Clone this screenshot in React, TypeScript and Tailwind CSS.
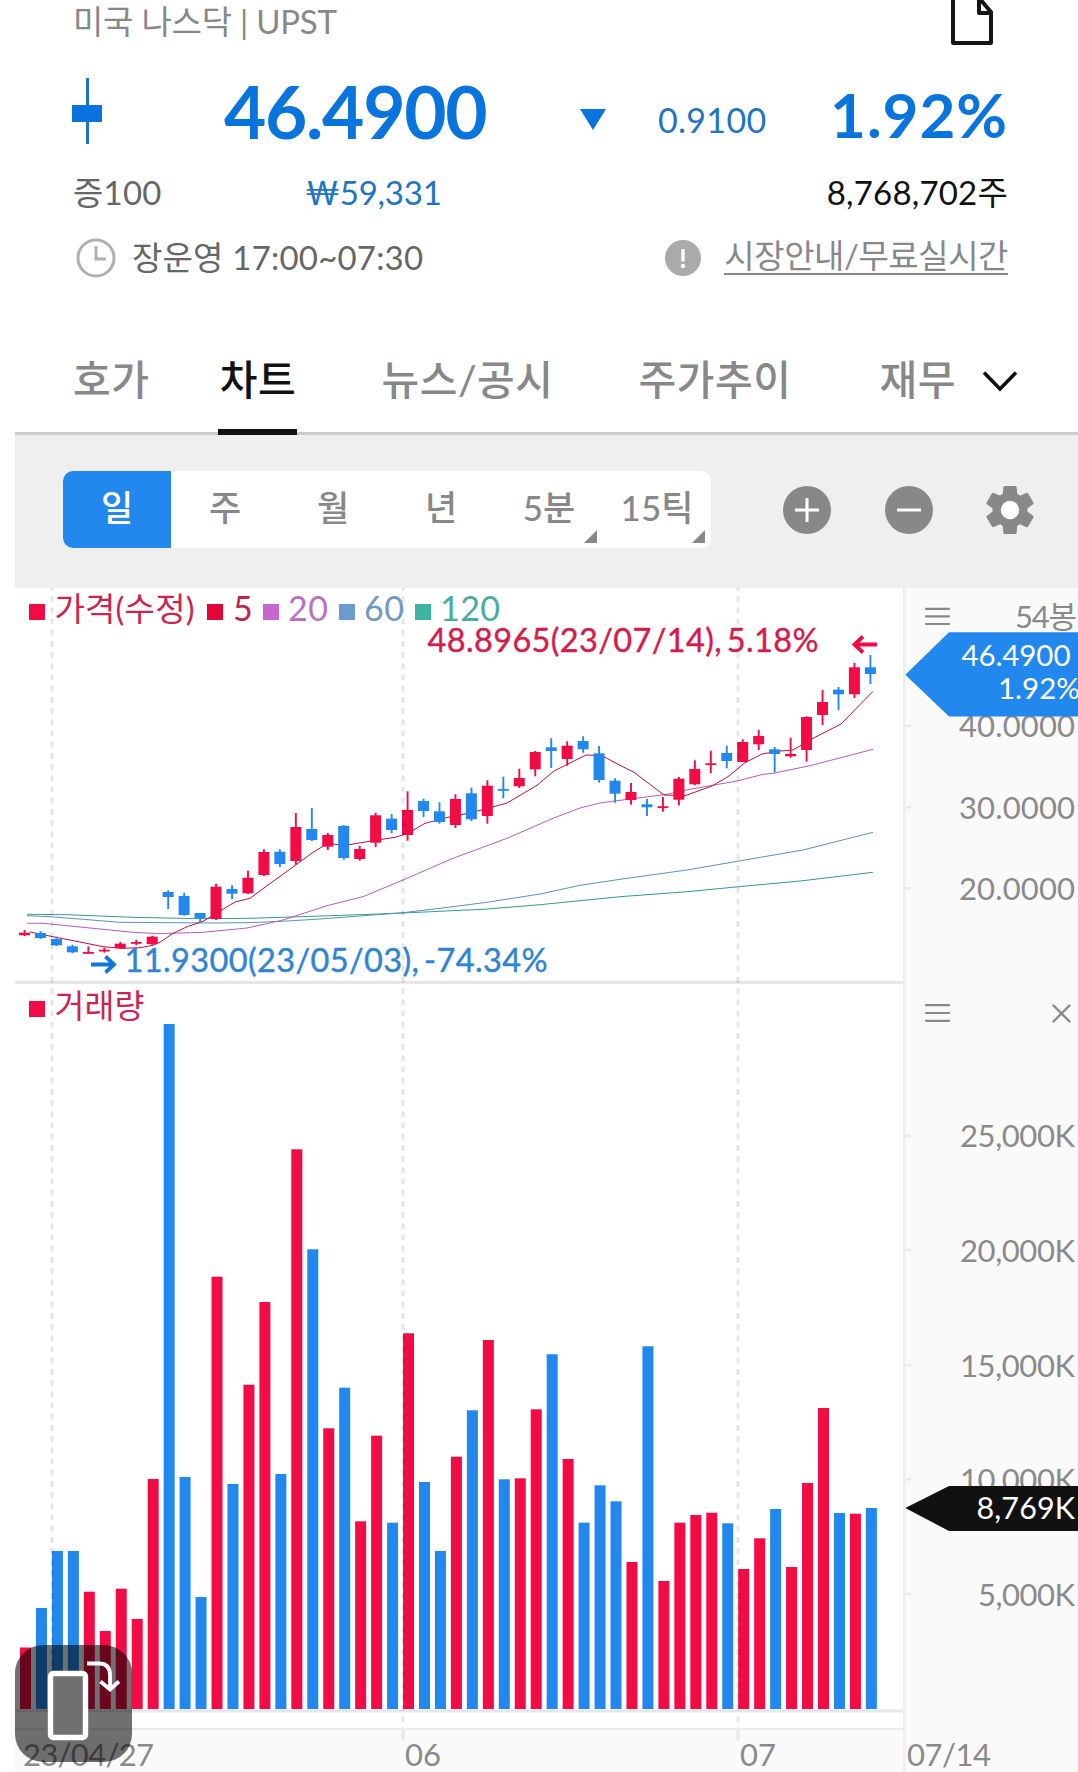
import React from "react";

type Candle = [up: number, high: number, top: number, bottom: number, low: number];

const RED = "#f20c46";
const BLUE = "#2388ed";

// up flag, then high / body top / body bottom / low in chart units
const candles: Candle[] = [
  [1, 342, 344.7, 347.3, 348],
  [0, 343.3, 345, 350, 351],
  [0, 348.7, 351, 357.3, 358],
  [0, 356.7, 358.3, 364.3, 365.3],
  [1, 358.3, 364, 365.7, 366],
  [1, 359.7, 361.7, 363.3, 364.7],
  [1, 354, 355.7, 360.3, 361],
  [1, 351.7, 354, 355.3, 357.3],
  [1, 347.7, 348.7, 356, 357],
  [0, 302.3, 304, 309, 321],
  [0, 304.7, 308, 327, 327.7],
  [0, 325, 325, 330.3, 334.3],
  [1, 295.7, 298.7, 331, 332],
  [0, 297.3, 301, 305.7, 311],
  [1, 282.7, 289.7, 305.3, 306],
  [1, 261.3, 264, 287, 288],
  [0, 261.3, 263.7, 276, 279],
  [1, 225, 239, 273, 276.7],
  [0, 220, 241, 252, 253],
  [1, 245, 247, 258.7, 262],
  [0, 237, 238, 270, 271.7],
  [1, 257.7, 261, 271, 272.7],
  [1, 224.7, 227.3, 254.7, 259],
  [0, 226, 230.7, 242, 245.3],
  [1, 203.3, 222, 247, 252.7],
  [0, 210.7, 213, 223, 229],
  [0, 214.3, 223.3, 234, 235.7],
  [1, 206.3, 211, 237, 240],
  [0, 199.7, 205.3, 231.3, 233],
  [1, 192.3, 197.7, 228, 235.7],
  [0, 188.7, 201, 202.7, 210.3],
  [1, 180.7, 190, 198.3, 200],
  [1, 163, 164, 181.3, 188.3],
  [0, 150.3, 159.3, 163, 180],
  [1, 153.3, 157.7, 171, 177.7],
  [0, 148.3, 153, 161.3, 164.7],
  [0, 158, 165.3, 192, 194.7],
  [0, 190.3, 192.7, 205.7, 214.7],
  [1, 195, 204, 212, 216.7],
  [0, 211, 216.3, 219.3, 228],
  [1, 209, 218.3, 219.7, 223.7],
  [1, 189, 190.7, 211.7, 217.3],
  [1, 172.3, 181, 196.3, 197.3],
  [1, 162.7, 175.3, 176.7, 185],
  [0, 157.7, 165, 173, 180.3],
  [1, 151.3, 154, 174, 174],
  [1, 142, 148, 156.3, 162],
  [0, 159, 161.3, 166, 184.3],
  [1, 149.7, 166, 168.3, 169.7],
  [1, 128.3, 129, 162, 173.7],
  [1, 102, 114, 127, 137],
  [0, 99, 101.7, 106.3, 122.3],
  [1, 75, 79.3, 106.3, 110],
  [0, 67, 79.3, 86, 96],
];

const VOLUME_BASE = 1121;

// bar heights, same order as the candles
const volumes = [
  61.5, 101, 158, 158, 117.3, 78, 120.3, 90, 230, 685, 232, 112, 432.3, 225,
  324.3, 407, 235, 559.7, 459.7, 280.7, 321.3, 187.7, 273.3, 186.3, 375.7, 227,
  158, 252.3, 298.7, 369, 229.7, 230.7, 299.7, 354.7, 250, 186.3, 223.7, 207.7,
  147, 362.7, 128, 186.3, 194, 196.3, 185.7, 140, 170.7, 200, 142, 226, 301,
  196, 195.3, 201,
];

const averages = [
  {
    color: "#359c8c",
    points:
      "27,326.3 67,326.7 133,329.3 200,330.7 250,330.3 300,328.7 360,326.7 403,325 483,321.3 540,316.7 590,311.7 620,308.7 687,303.7 743,298.3 803,292.7 873,284.3",
  },
  {
    color: "#5f90ba",
    points:
      "27,327.7 50,328.7 83,331.3 120,334.3 167,334.7 213,335 250,334.7 287,333 320,331 360,328 403,324.7 440,320.3 487,314.3 540,306 580,297.3 620,291.3 687,282 743,272.3 803,262 873,244.3",
  },
  {
    color: "#b75cc0",
    points:
      "27,335.3 43,335.3 67,337.7 100,341 133,344.3 157,345.7 203,344.3 247,340 283,332 327,317.7 363,308.7 403,292 453,270.3 507,250.3 553,230.3 580,220 600,215 620,212.3 667,206.3 690,201.3 737,193 763,186.3 773,185.3 810,177.7 873,161.3",
  },
  {
    color: "#b8123e",
    points:
      "30,344 53,348.7 80,354 103,358.7 123,360.3 140,359.7 153,357.3 160,354.3 172,346 187,338.7 203,333.3 218,324.3 235,314 250,310.3 267,297.7 282,287 297,276 313,264.3 328,255.3 340,257 349,256.7 373,252.7 395,249.3 408,245.3 425,235.3 448,229.3 473,224.3 507,215 537,197.3 554,183 586,167 602,167.7 620,177.3 634,184.3 664,207 685,207.7 712,198 728,188.7 745,174.7 762,166 777,163.3 793,162 813,150.3 841,136 873,103.3",
  },
];

const legend = [
  { x: 207, textX: 233, width: 18, label: "5", fill: "#e30639", text: "#c2214a" },
  { x: 263, textX: 288, width: 40, label: "20", fill: "#c766d1", text: "#bb6fc4" },
  { x: 339, textX: 364, width: 40, label: "60", fill: "#6a9bcf", text: "#7199c4" },
  { x: 415, textX: 440, width: 60, label: "120", fill: "#3fb3a1", text: "#48ad9d" },
];

const priceTicks = [
  { y: 137.7, width: 116, label: "40.0000" },
  { y: 219, width: 116, label: "30.0000" },
  { y: 300, width: 116, label: "20.0000" },
];

const volumeTicks = [
  { y: 547.7, width: 115, label: "25,000K" },
  { y: 662, width: 115, label: "20,000K" },
  { y: 777, width: 115, label: "15,000K" },
  { y: 891, width: 115, label: "10,000K" },
  { y: 1006, width: 97, label: "5,000K" },
];

const periods = ["일", "주", "월", "년", "5분", "15틱"];

const Header: React.FC = () => (
  <header className="h-[300px] pl-[72px] pr-[70px]">
    <div className="flex h-[44px] items-start justify-between">
      <span className="ml-px text-[33px] leading-[42px] tracking-[-0.25px] text-[#888]">
        미국 나스닥 | UPST
      </span>
      <svg width="44" height="46" viewBox="0 0 44 46" className="mr-[14px]" fill="none" stroke="#151515" strokeWidth="4" strokeLinejoin="round">
        <path d="M3 -4V43H41V12L29 -2M29 -4V13H41" />
      </svg>
    </div>
    <div className="flex h-[112px] text-[#0a74de]">
      <svg width="30" height="66" viewBox="0 0 30 66" className="mt-[34px]">
        <rect x="14" width="3" height="66" fill="#1f74c4" />
        <rect y="27" width="30" height="17" fill="#0a74de" />
      </svg>
      <span className="ml-[122px] mt-[22px] w-[270px] text-[73px] leading-[90px] font-bold tracking-[-1.3px]">
        46.4900
      </span>
      <svg width="26" height="21" viewBox="0 0 26 21" className="ml-[86px] mt-[65px]">
        <path d="M0 0H26L13 21Z" fill="#0a74de" />
      </svg>
      <span className="ml-[52px] mt-[55px] text-[34px] leading-[42px] tracking-[0.3px] text-[#1f74c4]">
        0.9100
      </span>
      <span className="ml-auto mt-[32px] text-[62px] leading-[76px] font-bold tracking-[0.9px]">
        1.92%
      </span>
    </div>
    <div className="flex h-[74px] items-center text-[33px]">
      <span className="ml-px w-[232px] tracking-[0.2px] text-[#666]">증100</span>
      <span className="tracking-[-0.2px] text-[#1f74c4]">₩59,331</span>
      <span className="ml-auto tracking-[0.2px] text-[#111]">8,768,702주</span>
    </div>
    <div className="flex h-[56px] items-center text-[33px]">
      <svg width="40" height="40" viewBox="0 0 40 40" className="ml-[4px]" fill="none" stroke="#b0b0b0" strokeWidth="3">
        <circle cx="20" cy="20" r="18" />
        <path d="M20 8V21H30" />
      </svg>
      <span className="ml-[16px] tracking-[0.2px] text-[#666]">장운영 17:00~07:30</span>
      <svg width="36" height="36" viewBox="0 0 36 36" className="ml-auto">
        <circle cx="18" cy="18" r="18" fill="#aaa" />
        <path d="M18 9V21.5" stroke="#fff" strokeWidth="3.4" />
        <circle cx="18" cy="26" r="2.2" fill="#fff" />
      </svg>
      <a className="-mt-[3px] ml-[23px] border-b-2 border-[#888] leading-[35px] tracking-[-0.45px] text-[#888]">
        시장안내/무료실시간
      </a>
    </div>
  </header>
);

const Tabs: React.FC = () => (
  <nav className="ml-[15px] flex h-[135px] items-end border-b-[3px] border-[#ccc] text-[41px] font-medium tracking-[0.5px] text-[#888]">
    <span className="ml-[58px] h-[83px]">호가</span>
    <span className="-mb-[3px] ml-[69px] h-[86px] w-[79px] border-b-[6px] border-[#111] text-center text-[#111]">
      차트
    </span>
    <span className="ml-[84px] h-[83px]">뉴스/공시</span>
    <span className="ml-[85px] h-[83px]">주가추이</span>
    <span className="ml-[88px] h-[83px]">재무</span>
    <svg width="36" height="24" viewBox="0 0 36 24" className="mb-[38px] ml-[26px]" fill="none" stroke="#111" strokeWidth="3.6">
      <path d="M2 2.5L18 19L34 2.5" />
    </svg>
  </nav>
);

const Toolbar: React.FC = () => (
  <div className="ml-[15px] flex h-[153px] items-center bg-[#efefef] pb-[4px] pl-[48px]">
    <div className="flex h-[77px] w-[648px] overflow-hidden rounded-[10px] bg-white text-[35px] font-medium text-[#888]">
      {periods.map((period, i) => (
        <button
          key={period}
          className={
            i === 0
              ? "w-[108px] bg-[#2388ed] pb-1 text-white"
              : "relative w-[108px] pb-1"
          }
        >
          {period}
          {i > 3 && (
            <svg width="13" height="13" viewBox="0 0 13 13" className="absolute right-[6px] bottom-[5px]">
              <path d="M13 0V13H0Z" fill="#888" />
            </svg>
          )}
        </button>
      ))}
    </div>
    <svg width="48" height="48" viewBox="0 0 48 48" className="ml-[72px]" stroke="#fff" strokeWidth="3">
      <circle cx="24" cy="24" r="24" fill="#888" stroke="none" />
      <path d="M12 24H36M24 12V36" />
    </svg>
    <svg width="48" height="48" viewBox="0 0 48 48" className="ml-[54px]" stroke="#fff" strokeWidth="3">
      <circle cx="24" cy="24" r="24" fill="#888" stroke="none" />
      <path d="M12 24H36" />
    </svg>
    <svg width="48" height="48" viewBox="0 0 48 48" className="ml-[53px]" fill="#888">
      <circle cx="24" cy="24" r="17.5" />
      {[0, 60, 120, 180, 240, 300].map((angle) => (
        <path
          key={angle}
          d="M19 0H29Q30.5 0 30.7 1.5L31.5 10H16.5L17.3 1.5Q17.5 0 19 0Z"
          transform={`rotate(${angle} 24 24)`}
        />
      ))}
      <circle cx="24" cy="24" r="9.2" fill="#fff" />
    </svg>
  </div>
);

const Plot: React.FC = () => (
  <svg width="888" height="1184" viewBox="15 0 888 1184" className="shrink-0">
    <rect x="15" y="1142" width="888" height="42" fill="#fafafa" />
    <rect x="15" y="1140" width="888" height="2" fill="#ebebeb" />
    <rect x="15" y="393" width="888" height="3" fill="#e7e7e7" />
    <rect x="15" y="1121.5" width="888" height="3" fill="#e7e7e7" />

    {volumes.map((height, i) => (
      <rect
        key={i}
        x={20 + i * 15.96}
        y={VOLUME_BASE - height}
        width="11"
        height={height}
        fill={candles[i][0] ? RED : BLUE}
      />
    ))}

    {averages.map((line) => (
      <polyline key={line.color} points={line.points} fill="none" stroke={line.color} strokeWidth="1" />
    ))}

    {candles.map(([up, high, top, bottom, low], i) => {
      const x = 19 + i * 15.96;
      return (
        <g key={i} fill={up ? RED : BLUE}>
          <rect x={x + 4.6} y={high} width="1.9" height={low - high} />
          <rect x={x} y={top} width="11" height={Math.max(bottom - top, 1.8)} />
        </g>
      );
    })}

    <g stroke="#000" strokeOpacity="0.1" strokeWidth="3">
      <path d="M52 0V1121M403 0V1140M738 0V1140" strokeDasharray="5.6 5.6" strokeDashoffset="2.9" />
      <path d="M403 1142V1153M738 1142V1153" strokeOpacity="0.07" />
    </g>

    <rect x="29" y="16" width="16" height="16" fill={RED} />
    <text x="54.5" y="32.5" fontSize="33" fill="#cc2450" textLength="140">
      가격(수정)
    </text>
    {legend.map((item) => (
      <g key={item.label}>
        <rect x={item.x} y="16" width="16" height="16" fill={item.fill} />
        <text x={item.textX} y="32.7" fontSize="34" fill={item.text} textLength={item.width}>
          {item.label}
        </text>
      </g>
    ))}

    <text x="427.5" y="64" fontSize="32.5" wordSpacing="-4" fill="#d41c4c" stroke="#d41c4c" strokeWidth="0.4" textLength="391">
      48.8965(23/07/14), 5.18%
    </text>
    <path d="M877 56.5H855M863 48.5L854.5 56.5L863 64.5" fill="none" stroke={RED} strokeWidth="3.8" />

    <text x="124.5" y="384" fontSize="32.5" wordSpacing="-4" fill="#2f84d4" stroke="#2f84d4" strokeWidth="0.4" textLength="423">
      11.9300(23/05/03), -74.34%
    </text>
    <path d="M91 376.5H113M105.5 368.5L114 376.5L105.5 384.5" fill="none" stroke="#0f76e0" strokeWidth="3.8" />

    <rect x="29" y="413" width="16" height="16" fill={RED} />
    <text x="54.5" y="429.8" fontSize="32.5" fill="#cc2450" textLength="90">
      거래량
    </text>

    <g fontSize="31" fill="#8a8a8a">
      <text x="23" y="1178" textLength="131">
        23/04/27
      </text>
      <text x="405" y="1178">06</text>
      <text x="740" y="1178">07</text>
    </g>
  </svg>
);

const Axis: React.FC = () => (
  <svg width="175" height="1184" viewBox="903 0 175 1184" className="shrink-0" fontSize="31">
    <rect x="903" width="175" height="1184" fill="#fafafa" />
    <rect x="902" width="3.5" height="1184" fill="#eee" />

    <path d="M926 20.8H949M926 28.4H949M926 36H949" stroke="#888" strokeWidth="2.2" strokeLinecap="round" />
    <text x="1015" y="40" fill="#8a8a8a" textLength="62">
      54봉
    </text>
    <path d="M926 417.2H949M926 425H949M926 432.8H949" stroke="#888" strokeWidth="2.2" strokeLinecap="round" />
    <path d="M1053.5 417.5L1069.5 433.5M1069.5 417.5L1053.5 433.5" stroke="#888" strokeWidth="2.4" strokeLinecap="round" />

    {[...priceTicks, ...volumeTicks].map((tick) => (
      <g key={tick.label}>
        <rect x="905.5" y={tick.y - 1} width="6" height="2.5" fill="#e9e9e9" />
        <text x={1075 - tick.width} y={tick.y + 11.5} fill="#8a8a8a" textLength={tick.width}>
          {tick.label}
        </text>
      </g>
    ))}

    <path d="M905.3 86.7L949 44.3H1078V128.5H949Z" fill={BLUE} />
    <text x="961.5" y="78.3" fontSize="29.5" fill="#fff" textLength="109">
      46.4900
    </text>
    <text x="998" y="111.3" fontSize="29.5" fill="#fff">
      1.92%
    </text>

    <path d="M905.3 920L949 898H1078V943H949Z" fill="#111" />
    <text x="976.5" y="931" fontSize="30.5" fill="#fff" textLength="98.5">
      8,769K
    </text>

    <text x="907" y="1178" fill="#8a8a8a" textLength="84">
      07/14
    </text>
  </svg>
);

const RotateButton: React.FC = () => (
  <button className="absolute bottom-[10px] left-[15px] h-[117px] w-[117px] rounded-[28px] bg-black/56">
    <svg width="117" height="117" viewBox="15 1645 117 117" fill="none" stroke="#fff">
      <rect x="50.5" y="1673.5" width="35" height="64" rx="3" strokeWidth="5.4" fill="#707070" />
      <path d="M87 1663.5H99Q110 1663.5 110 1675V1689M100.5 1681.5L110 1689.5L119 1681.5" strokeWidth="3.8" />
    </svg>
  </button>
);

const App: React.FC = () => {
  return (
    <div className="relative h-[1772px] w-[1078px] overflow-hidden bg-white font-[Lato,'Noto_Sans_CJK_KR',sans-serif]">
      <Header />
      <Tabs />
      <Toolbar />
      <main className="ml-[15px] flex">
        <Plot />
        <Axis />
      </main>
      <RotateButton />
    </div>
  );
};

export default App;
